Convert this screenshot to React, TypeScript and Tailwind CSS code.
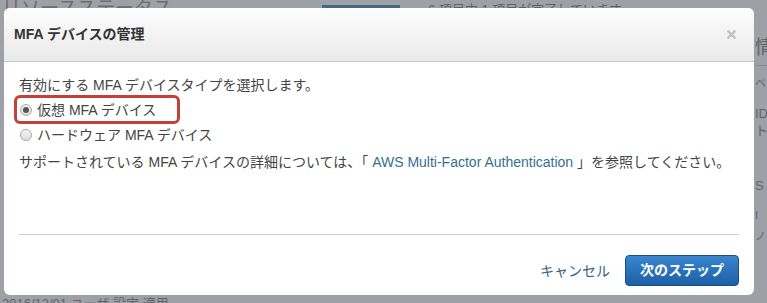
const jp = "font-['Liberation_Sans','Noto_Sans_CJK_JP',sans-serif]";

function Radio({ checked }: { checked?: boolean }) {
  return (
    <span className="flex h-[12px] w-[12px] items-center justify-center rounded-full border border-[#a9a9a9] bg-gradient-to-b from-[#f4f4f4] to-[#dcdcdc]">
      {checked && <span className="h-[6px] w-[6px] rounded-full bg-[#555]" />}
    </span>
  );
}

function Backdrop() {
  return (
    <div className={`flex h-full w-full flex-col text-[#5f6368] ${jp}`}>
      <div className="flex h-[10px] items-end overflow-hidden">
        <span className="ml-[2px] -mb-[8px] text-[19px] leading-none text-[#6a6e72]">リソースステータス</span>
        <span className="ml-[150px] mb-[2px] h-[3px] w-[78px] bg-[#3f6b82]" />
        <span className="ml-[28px] -mb-[6px] text-[13px] leading-none">6 項目中 1 項目が完了しています</span>
      </div>
      <div className="flex flex-1">
        <div className="flex-1" />
        <div className="flex w-[12px] flex-col overflow-hidden whitespace-nowrap pt-[28px] text-[13px] leading-none">
          <span className="text-[19px]">情報</span>
          <span className="mt-[8px] h-px w-full bg-[#868a8e]" />
          <span className="mt-[12px] text-[11px]">ベ</span>
          <span className="mt-[18px]">ID</span>
          <span className="mt-[4px]">ト</span>
          <span className="mt-[42px]">S</span>
          <span className="mt-[18px] text-[11px]">I</span>
          <span className="mt-[10px] text-[11px]">ノ</span>
        </div>
      </div>
      <div className="flex h-[8px] overflow-hidden">
        <span className="ml-[2px] mt-[2px] text-[13px] leading-none">2016/12/01 ユーザ 設定 適用</span>
      </div>
    </div>
  );
}

export default function App() {
  return (
    <div className="relative h-[303px] w-[767px] overflow-hidden bg-[#9da1a5]">
      <Backdrop />
      <div
        role="dialog"
        className={`absolute left-[4px] top-[8px] flex h-[287px] w-[750px] flex-col overflow-hidden rounded-[6px] bg-white ${jp}`}
      >
        <div className="flex h-[54px] items-center justify-between border-b border-[#c9c9c9] bg-gradient-to-b from-[#fdfdfd] to-[#e9e9e9] pl-[10px] pr-[18px]">
          <h3 className="text-[14px] font-bold text-[#333]">MFA デバイスの管理</h3>
          <svg viewBox="0 0 10 10" className="h-[9px] w-[9px]" aria-hidden>
            <path d="M1.5 1.5 8.5 8.5M8.5 1.5 1.5 8.5" stroke="#c2c2c2" strokeWidth="2.6" strokeLinecap="round" />
          </svg>
        </div>

        <div className="flex flex-1 flex-col px-[15px] pt-[13px] text-[14px] leading-[20px] text-[#444]">
          <p>有効にする MFA デバイスタイプを選択します。</p>
          <div className="-ml-[5px] flex h-[29px] w-[166px] items-center gap-[5px] rounded-[6px] border-[3px] border-[#c4413a] pl-[3px]">
            <Radio checked />
            <span>仮想 MFA デバイス</span>
          </div>
          <div className="flex h-[21px] items-center gap-[5px] pl-[1px]">
            <Radio />
            <span>ハードウェア MFA デバイス</span>
          </div>
          <p className="mt-[7px]">
            サポートされている MFA デバイスの詳細については、「
            <span className="text-[#36708e]"> AWS Multi-Factor Authentication </span>
            」を参照してください。
          </p>
          <div className="mt-auto mb-[20px] h-px bg-[#cccccc]" />
        </div>

        <div className="flex h-[40px] shrink-0 items-start justify-end gap-[15px] pr-[15px]">
          <span className="mt-[6px] text-[14px] text-[#30658a]">キャンセル</span>
          <button
            type="button"
            className="h-[31px] w-[114px] rounded-[4px] border border-[#18518a] bg-gradient-to-b from-[#3a86cf] to-[#1c5fa6] text-[14px] font-bold text-white"
          >
            次のステップ
          </button>
        </div>
      </div>
    </div>
  );
}
